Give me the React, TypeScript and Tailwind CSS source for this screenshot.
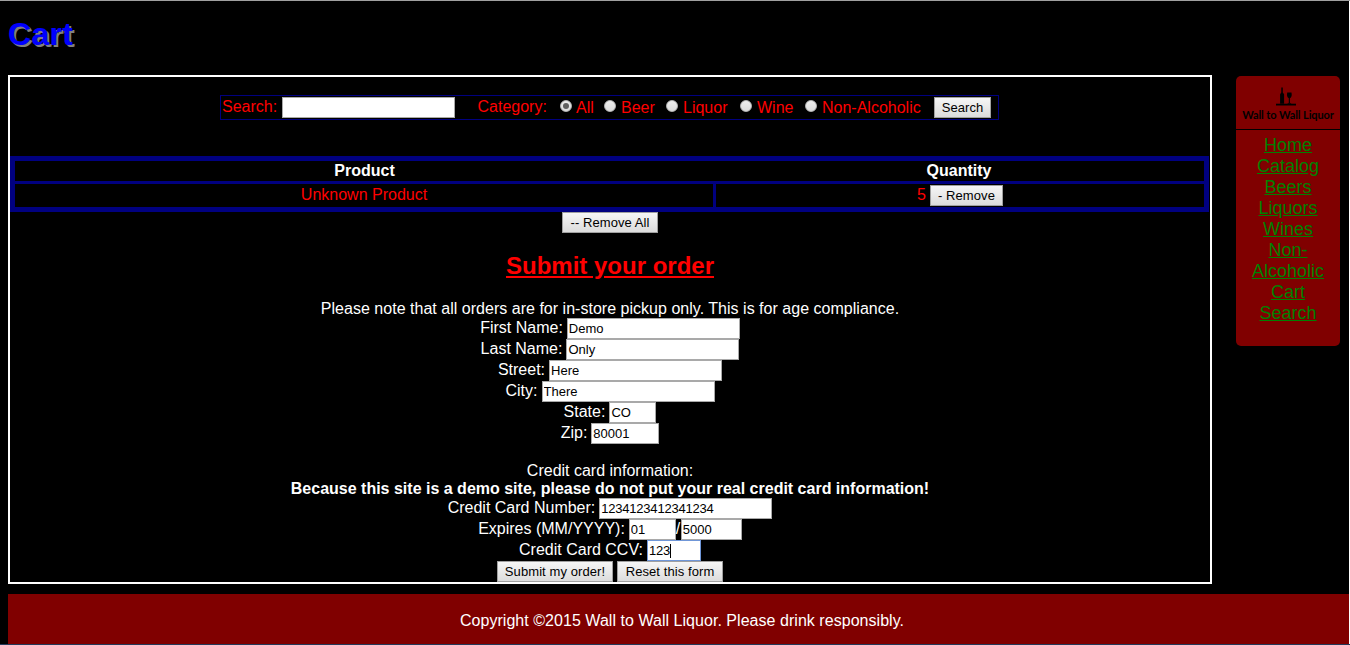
import React from 'react';

const navLinks = ['Home', 'Catalog', 'Beers', 'Liquors', 'Wines', 'Non-\nAlcoholic', 'Cart', 'Search'];

function Button({ children, className = '' }: { children: React.ReactNode; className?: string }) {
  return (
    <button
      className={`h-[21px] shrink-0 whitespace-nowrap border border-[#a0a0a0] bg-linear-to-b from-[#f6f6f6] to-[#dcdcdc] text-center text-[13px] leading-[18px] tracking-[0.08px] text-black ${className}`}
    >
      {children}
    </button>
  );
}

function Field({
  value,
  className = 'w-[173px]',
  border = 'border-[#a9a9a9]',
}: {
  value?: string;
  className?: string;
  border?: string;
}) {
  return (
    <input
      type="text"
      defaultValue={value}
      className={`block h-[21px] shrink-0 border bg-white pb-px pl-[1px] text-[13px] leading-[16px] text-black outline-none ${border} ${className}`}
    />
  );
}

function Row({ label, children }: { label: string; children: React.ReactNode }) {
  return (
    <div className="flex h-[21px] justify-center">
      <span className="mr-[4px] whitespace-nowrap pt-px leading-[18px]">{label}</span>
      {children}
    </div>
  );
}

function Radio({ label, checked, className }: { label: string; checked?: boolean; className: string }) {
  return (
    <label className={`flex shrink-0 ${className}`}>
      <span className="mt-[3px] flex size-[12px] shrink-0 items-center justify-center rounded-full border border-[#b5b5b5] bg-linear-to-b from-[#eeeeee] to-[#dcdcdc]">
        {checked && <span className="size-[6px] rounded-full bg-[#606060]" />}
      </span>
      <span className={`mt-[2px] whitespace-nowrap ${checked ? 'ml-[4px]' : 'ml-[5px]'}`}>{label}</span>
    </label>
  );
}

function Logo() {
  return (
    <div className="flex h-[53px] flex-col items-center pt-[11px] text-black">
      <svg className="mr-[5px]" width="20" height="19" viewBox="0 0 20 19" fill="currentColor">
        <path d="M5.300 0.500h1.500v5l1.300 1.800v9.500h-4V7.300l1.200-1.800z" />
        <path d="M11.200 5.500h4.300q.8 4.500-1.600 5.700v4.600l1.700.9h-4.500l1.700-.9v-4.600q-2.400-1.200-1.600-5.700z" />
        <path d="M0 16.700h20v1.800H0z" />
      </svg>
      <span className="mt-[2px] whitespace-nowrap font-[Lato] text-[11px] font-bold leading-[14px] tracking-[-0.1px]">
        Wall to Wall Liquor
      </span>
    </div>
  );
}

export default function App() {
  return (
    <div className="flex h-[645px] w-[1350px] flex-col overflow-hidden border-b border-t border-b-[#233a5a] border-t-[#a0a0a0] bg-black font-['Liberation_Sans',Arial,sans-serif] text-[16px] leading-[18px] text-white">
      <div className="flex min-h-0 grow flex-col border-r border-white pl-[8px]">
        <h1 className="h-[74px] pt-[15px] text-[32px] font-bold leading-[37px] tracking-[0.3px] text-[#0000ff] [text-shadow:2px_2px_#808080]">
          Cart
        </h1>
        <div className="flex h-[519px] items-start">
          <main className="h-[509px] w-[1204px] shrink-0 border-2 border-white">
            <form className="ml-[210px] mt-[18px] flex h-[25px] w-[779px] border border-[#000080] pt-px text-[#ff0000]">
              <span className="ml-[1px] w-[60px] shrink-0 pt-px">Search:</span>
              <Field />
              <span className="ml-[22.500px] w-[82.500px] shrink-0 pt-px">Category:</span>
              <Radio label="All" checked className="w-[44px]" />
              <Radio label="Beer" className="w-[62px]" />
              <Radio label="Liquor" className="w-[74px]" />
              <Radio label="Wine" className="w-[65px]" />
              <Radio label="Non-Alcoholic" className="w-[129px]" />
              <Button className="w-[57px]">Search</Button>
            </form>

            <div className="mt-[36px] grid h-[56px] w-[1199px] grid-cols-[701px_488px] grid-rows-[20px_23px] gap-y-[3px] border-[5px] border-[#000080] bg-[#000080] text-center">
              <div className="bg-black pr-[2px] pt-px font-bold">Product</div>
              <div className="bg-black pr-[2px] pt-px font-bold">Quantity</div>
              <div className="border-r-[3px] border-[#000080] bg-black pt-[2px] text-[#ff0000]">Unknown Product</div>
              <div className="flex justify-center bg-black pt-px text-[#ff0000]">
                <span className="mr-[4px] pt-px">5</span>
                <Button className="w-[73px]">- Remove</Button>
              </div>
            </div>

            <div className="flex justify-center">
              <Button className="w-[96px]">-- Remove All</Button>
            </div>
            <h2 className="mt-[19px] text-center text-[24px] font-bold leading-[27px] text-[#ff0000] underline">
              Submit your order
            </h2>
            <p className="mt-[21px] text-center tracking-[0.02px]">
              Please note that all orders are for in-store pickup only. This is for age compliance.
            </p>
            <Row label="First Name:"><Field value="Demo" /></Row>
            <Row label="Last Name:"><Field value="Only" /></Row>
            <Row label="Street:"><Field value="Here" /></Row>
            <Row label="City:"><Field value="There" /></Row>
            <Row label="State:"><Field value="CO" className="w-[47px]" /></Row>
            <Row label="Zip:"><Field value="80001" className="w-[68px]" /></Row>
            <p className="mt-[18px] text-center">Credit card information:</p>
            <p className="text-center font-bold">
              Because this site is a demo site, please do not put your real credit card information!
            </p>
            <Row label="Credit Card Number:">
              <Field value="1234123412341234" className="w-[173px] tracking-[-0.22px]" />
            </Row>
            <Row label="Expires (MM/YYYY):">
              <Field value="01" className="w-[47px]" />
              <span className="w-[5px] pt-px">/</span>
              <Field value="5000" className="w-[61px]" />
            </Row>
            <Row label="Credit Card CCV:">
              <span className="relative">
                <Field value="123" className="w-[54px] tracking-[-0.22px]" border="border-[#6f96d8]" />
                <span className="absolute left-[23px] top-[4px] h-[14px] w-px bg-black" />
              </span>
            </Row>
            <div className="flex justify-center gap-[4px]">
              <Button className="w-[116px]">Submit my order!</Button>
              <Button className="w-[106px]">Reset this form</Button>
            </div>
          </main>

          <aside className="ml-[24px] mt-px h-[270px] w-[104px] shrink-0 rounded-[5px] bg-[#800000]">
            <Logo />
            <hr className="h-px border-0 bg-black" />
            <nav className="flex flex-col items-center pt-[5px] text-center text-[18px] leading-[21px] text-[#008000]">
              {navLinks.map((link) => (
                <a key={link} href="#" className="whitespace-pre-line underline">
                  {link}
                </a>
              ))}
            </nav>
          </aside>
        </div>
        <footer className="h-[50px] bg-[#800000] pl-[7px] pt-[18px] text-center tracking-[0.04px]">
          Copyright ©2015 Wall to Wall Liquor. Please drink responsibly.
        </footer>
      </div>
    </div>
  );
}
